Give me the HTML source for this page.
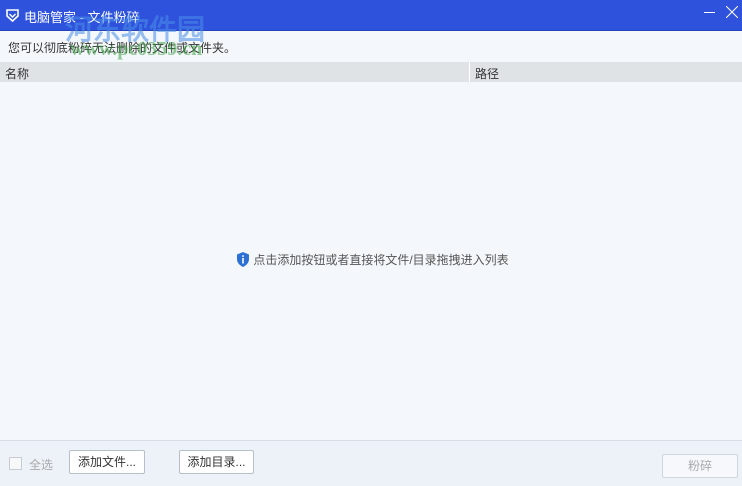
<!DOCTYPE html>
<html><head><meta charset="utf-8"><style>
*{margin:0;padding:0;box-sizing:border-box}
body{width:742px;height:486px;background:#f4f8fc;font-family:"Liberation Sans","Noto Sans CJK SC",sans-serif;font-size:12px;color:#333;position:relative;overflow:hidden}
.t{position:absolute;left:0;top:0;width:742px;height:31px;background:#2e52dc;border-bottom:1px solid #2443b8}
.t span{position:absolute;left:24px;top:7px;color:#fff;font-size:13px}
.d{position:absolute;top:39px;left:8px;font-size:12px;color:#333}
.h{position:absolute;top:62px;left:0;width:742px;height:20px;background:#dfe3e6;font-size:12px}
.h span{position:absolute;top:3px}
.f{position:absolute;top:440px;left:0;width:742px;height:46px;background:#edf2f9;border-top:1px solid #d6dde6}
.b{position:absolute;height:24px;background:#fff;border:1px solid #b9bfc6;border-radius:2px;font-size:12px;color:#333;text-align:center;line-height:22px}
.wm{position:absolute;font-family:"Liberation Serif",serif;font-weight:bold;color:#3aa0e0;opacity:.55}
</style></head><body>
<div class="t"><svg style="position:absolute;left:5px;top:8px" width="15" height="15" viewBox="0 0 15 15"><path d="M2 2h11v6l-5.5 5L2 8z" fill="none" stroke="#fff" stroke-width="1.6"/><path d="M4.5 6l3 3 3-3" fill="none" stroke="#fff" stroke-width="1.4"/></svg><span>电脑管家 - 文件粉碎</span>
<div style="position:absolute;left:704px;top:12px;width:11px;height:1px;background:#fff"></div>
<svg style="position:absolute;left:726px;top:6px" width="12" height="12"><path d="M0 0L12 12M12 0L0 12" stroke="#fff" stroke-width="1"/></svg></div>
<div class="wm" style="left:65px;top:8px;font-size:28px;color:#4a8ee8">河东软件园</div>
<div class="d">您可以彻底粉碎无法删除的文件或文件夹。</div>
<div class="wm" style="left:70px;top:38px;font-size:20px;color:#3aa040">www.pc0359.cn</div>
<div class="h"><span style="left:5px">名称</span><div style="position:absolute;left:469px;top:0;width:1px;height:20px;background:#fff"></div><span style="left:475px">路径</span></div>
<div style="position:absolute;left:236px;top:251px;font-size:12px;color:#555"><svg style="vertical-align:-3px" width="14" height="15" viewBox="0 0 14 15"><path d="M7 0L13 2.5V7c0 4-3 6.5-6 8C4 13.5 1 11 1 7V2.5z" fill="#2d6fd3"/><rect x="6.2" y="6" width="1.6" height="5.5" fill="#fff"/><rect x="6.2" y="3.3" width="1.6" height="1.6" fill="#fff"/></svg> 点击添加按钮或者直接将文件/目录拖拽进入列表</div>
<div class="f">
<div style="position:absolute;left:9px;top:16px;width:13px;height:13px;border:1px solid #c8ccd2;background:#f6f8fa"></div>
<span style="position:absolute;left:29px;top:15px;color:#aaa">全选</span>
<div class="b" style="left:69px;top:9px;width:76px">添加文件...</div>
<div class="b" style="left:179px;top:9px;width:75px">添加目录...</div>
<div class="b" style="left:662px;top:13px;width:76px;color:#aaa;border-color:#d0d5db;background:#f6f8fb">粉碎</div>
</div>
</body></html>
